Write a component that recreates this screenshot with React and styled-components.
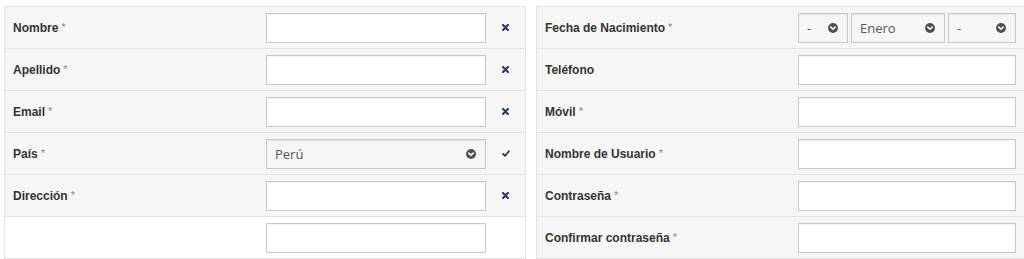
import styled, { createGlobalStyle } from "styled-components";

const GlobalStyle = createGlobalStyle`
  html, body {
    margin: 0;
    padding: 0;
    background: #fff;
    overflow: hidden;
  }
  body {
    font-family: "Liberation Sans", Arial, sans-serif;
  }
`;

const Page = styled.div`
  display: flex;
  align-items: flex-start;
  gap: 10px;
  padding: 6px 0 0 4px;
  width: 1024px;
  box-sizing: border-box;
  overflow: hidden;
`;

const Table = styled.div`
  flex: none;
  display: grid;
  grid-template-columns: ${(p) => p.$cols};
  width: ${(p) => p.$width}px;
  border: 1px solid #e2e2e2;
  border-bottom: none;
  box-sizing: border-box;
`;

const Cell = styled.div`
  height: 42px;
  box-sizing: border-box;
  display: flex;
  align-items: center;
  background: ${(p) => (p.$blank ? "#fff" : "#f6f6f6")};
  border-bottom: 1px solid #e2e2e2;
  padding: ${(p) => p.$pad || "0"};
  justify-content: ${(p) => (p.$center ? "center" : "flex-start")};
`;

const Label = styled.span`
  font-size: 12px;
  font-weight: bold;
  color: #333;
`;

const Req = styled.span`
  font-weight: normal;
  color: #888;
  font-size: 11px;
  margin-left: 3px;
  position: relative;
  top: -1px;
`;

const Input = styled.div`
  width: ${(p) => p.$w}px;
  height: 30px;
  box-sizing: border-box;
  background: ${(p) => (p.$select ? "#f6f6f6" : "#fff")};
  border: 1px solid #c8c8c8;
  box-shadow: inset 0 1px 1px rgba(0, 0, 0, 0.06);
  display: flex;
  align-items: center;
  justify-content: space-between;
  padding: 0 9px 0 8px;
  font-family: "Open Sans", sans-serif;
  font-size: 13px;
  color: #555;
`;

const SelectGroup = styled.div`
  display: flex;
  gap: 3px;
`;

const Chevron = () => (
  <svg width="10" height="10" viewBox="0 0 12 12">
    <circle cx="6" cy="6" r="6" fill="#505050" />
    <path d="M3.4 4.9 L6 7.5 L8.6 4.9" stroke="#fff" strokeWidth="1.9" fill="none" strokeLinecap="round" strokeLinejoin="round" />
  </svg>
);

const Cross = () => (
  <svg width="7" height="7" viewBox="0 0 10 10">
    <path d="M1.5 1.5 L8.5 8.5 M8.5 1.5 L1.5 8.5" stroke="#2b3566" strokeWidth="3" strokeLinecap="round" />
  </svg>
);

const Check = () => (
  <svg width="8" height="7" viewBox="0 0 10 9">
    <path d="M1.2 5 L3.8 7.4 L8.8 1.6" stroke="#2b3566" strokeWidth="2.4" fill="none" strokeLinecap="round" strokeLinejoin="round" />
  </svg>
);

const Select = ({ w, value }) => (
  <Input $w={w} $select>
    <span>{value}</span>
    <Chevron />
  </Input>
);

const leftRows = [
  { label: "Nombre", req: true, icon: "x" },
  { label: "Apellido", req: true, icon: "x" },
  { label: "Email", req: true, icon: "x" },
  { label: "País", req: true, icon: "ok", select: "Perú" },
  { label: "Dirección", req: true, icon: "x" },
  { label: "", blank: true },
];

const rightRows = [
  { label: "Teléfono" },
  { label: "Móvil", req: true },
  { label: "Nombre de Usuario", req: true },
  { label: "Contraseña", req: true },
  { label: "Confirmar contraseña", req: true },
];

const LabelCell = ({ label, req, blank }) => (
  <Cell $pad="0 0 0 8px" $blank={blank}>
    {label && (
      <Label>
        {label}
        {req && <Req>*</Req>}
      </Label>
    )}
  </Cell>
);

export default function App() {
  return (
    <>
      <GlobalStyle />
      <Page>
        <Table $cols="261px 220px 39px" $width={522}>
          {leftRows.map((r, i) => (
            <div key={i} style={{ display: "contents" }}>
              <LabelCell {...r} />
              <Cell $blank={r.blank}>
                {r.select ? <Select w={220} value={r.select} /> : <Input $w={220} />}
              </Cell>
              <Cell $blank={r.blank} $center>
                {r.icon === "x" && <Cross />}
                {r.icon === "ok" && <Check />}
              </Cell>
            </div>
          ))}
        </Table>
        <Table $cols="261px 218px 8px" $width={489}>
          <LabelCell label="Fecha de Nacimiento" req />
          <Cell>
            <SelectGroup>
              <Select w={50} value="-" />
              <Select w={94} value="Enero" />
              <Select w={68} value="-" />
            </SelectGroup>
          </Cell>
          <Cell />
          {rightRows.map((r, i) => (
            <div key={i} style={{ display: "contents" }}>
              <LabelCell {...r} />
              <Cell>
                <Input $w={218} />
              </Cell>
              <Cell />
            </div>
          ))}
        </Table>
      </Page>
    </>
  );
}
